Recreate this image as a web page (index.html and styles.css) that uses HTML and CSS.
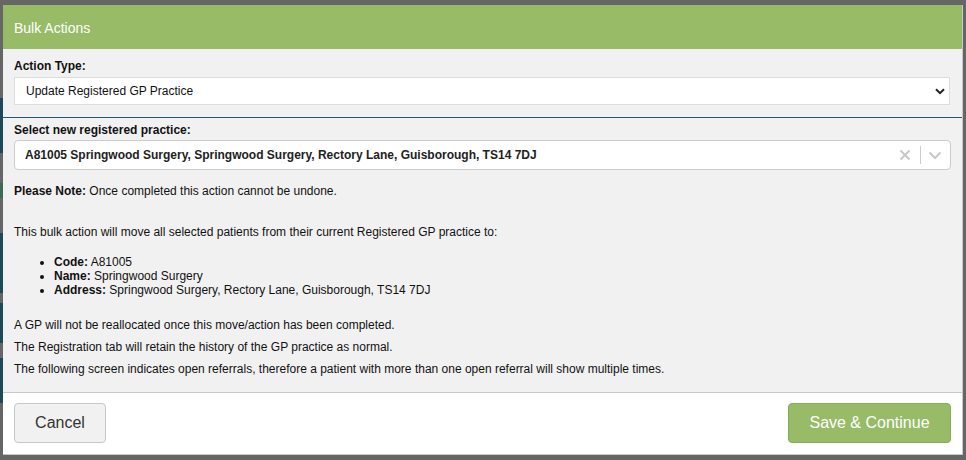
FILE: index.html
```html
<!DOCTYPE html>
<html lang="en">
<head>
<meta charset="utf-8">
<title>Bulk Actions</title>
<link rel="stylesheet" href="styles.css">
</head>
<body>
<div class="backdrop">
  <div class="page-edge">
    <span class="edge-block b1"></span>
    <span class="edge-block b2"></span>
    <span class="edge-block b3"></span>
    <span class="edge-block b4"></span>
    <span class="edge-block b5"></span>
  </div>
  <div class="modal">
    <div class="modal-header">Bulk Actions</div>
    <div class="modal-body">
      <label class="field-label">Action Type:</label>
      <div class="native-select">
        <span>Update Registered GP Practice</span>
        <svg class="select-caret" width="10" height="7" viewBox="0 0 10 7"><path d="M1 1.2 L5 5.2 L9 1.2" fill="none" stroke="#222" stroke-width="2"/></svg>
      </div>
      <hr class="divider">
      <label class="field-label">Select new registered practice:</label>
      <div class="react-select">
        <span class="rs-value">A81005 Springwood Surgery, Springwood Surgery, Rectory Lane, Guisborough, TS14 7DJ</span>
        <span class="rs-indicators">
          <svg class="rs-clear" width="12" height="12" viewBox="0 0 12 12"><path d="M1.5 1.5 L10.5 10.5 M10.5 1.5 L1.5 10.5" stroke="#c8c8c8" stroke-width="2"/></svg>
          <span class="rs-sep"></span>
          <svg class="rs-drop" width="14" height="9" viewBox="0 0 14 9"><path d="M1.5 1.5 L7 7 L12.5 1.5" fill="none" stroke="#c8c8c8" stroke-width="2"/></svg>
        </span>
      </div>
      <p class="note"><strong>Please Note:</strong> Once completed this action cannot be undone.</p>
      <p class="intro">This bulk action will move all selected patients from their current Registered GP practice to:</p>
      <ul class="details">
        <li><strong>Code:</strong> A81005</li>
        <li><strong>Name:</strong> Springwood Surgery</li>
        <li><strong>Address:</strong> Springwood Surgery, Rectory Lane, Guisborough, TS14 7DJ</li>
      </ul>
      <p class="info">A GP will not be reallocated once this move/action has been completed.</p>
      <p class="info">The Registration tab will retain the history of the GP practice as normal.</p>
      <p class="info">The following screen indicates open referrals, therefore a patient with more than one open referral will show multiple times.</p>
    </div>
    <div class="modal-footer">
      <button class="btn btn-cancel">Cancel</button>
      <button class="btn btn-save">Save &amp; Continue</button>
    </div>
  </div>
</div>
</body>
</html>
```
FILE: styles.css
```css
* { box-sizing: border-box; }
html, body { margin: 0; padding: 0; }
body {
  background: #666666;
  font-family: "Liberation Sans", Arial, sans-serif;
  width: 966px;
  height: 460px;
  overflow: hidden;
}
.backdrop {
  display: flex;
  padding: 5px 3px 5px 0;
  height: 460px;
}
.page-edge {
  width: 3px;
  display: flex;
  flex-direction: column;
  padding-top: 93px;
}
.edge-block { display: block; width: 3px; background: #1d4a5a; }
.edge-block.b1 { height: 55px; }
.edge-block.b2 { height: 15px; margin-top: 30px; background: #3d6a55; }
.edge-block.b3 { height: 60px; margin-top: 35px; }
.edge-block.b4 { height: 40px; margin-top: 10px; }
.edge-block.b5 { height: 45px; margin-top: 15px; }
.modal {
  width: 960px;
  height: 450px;
  display: flex;
  flex-direction: column;
  background: #f1f1f1;
  border-bottom: 1px solid #c8c8c8;
  border-right: 1px solid #c8c8c8;
}
.modal-header {
  height: 44px;
  background: #97bb67;
  color: #fff;
  font-size: 14px;
  padding: 15px 11px 0;
  line-height: 16px;
}
.modal-body {
  flex: 1;
  padding: 10px 12px 0 11px;
  font-size: 12px;
  color: #111;
  line-height: 14px;
}
.field-label {
  display: block;
  font-weight: bold;
  color: #111;
}
.native-select {
  margin-top: 4px;
  height: 28px;
  background: #fff;
  border: 1px solid #dcdcdc;
  display: flex;
  align-items: center;
  justify-content: space-between;
  padding: 0 4px 0 11px;
  color: #111;
}
.select-caret { margin-top: 1px; }
.divider {
  border: 0;
  border-top: 1px solid #1f5a78;
  margin: 12px -12px 5px -11px;
  height: 0;
}
.react-select {
  margin-top: 3px;
  margin-right: -1px;
  height: 30px;
  background: #fff;
  border: 1px solid #cccccc;
  border-radius: 4px;
  display: flex;
  align-items: center;
  justify-content: space-between;
  padding: 0 8px 0 10px;
}
.rs-value { font-weight: bold; color: #222; }
.rs-indicators { display: flex; align-items: center; }
.rs-clear { margin-right: 9px; }
.rs-sep { width: 1px; height: 18px; background: #cccccc; margin-right: 7px; }
.rs-drop { margin-top: 1px; }
.note { margin: 14px 0 0; }
.intro { margin: 27px 0 0; }
.details {
  margin: 16px 0 0;
  padding-left: 40px;
}
.details li { line-height: 14px; }
.info { margin: 21px 0 0; line-height: 14px; }
.info + .info { margin-top: 8px; }
.modal-footer {
  height: 62px;
  flex: 0 0 62px;
  background: #fff;
  border-top: 1px solid #c8c8c8;
  display: flex;
  justify-content: space-between;
  align-items: flex-start;
  padding: 10px 11px 0 11px;
}
.btn {
  height: 40px;
  font-family: "Liberation Sans", Arial, sans-serif;
  font-size: 16px;
  border-radius: 4px;
  cursor: pointer;
}
.btn-cancel {
  width: 92px;
  background: #f1f1f1;
  border: 1px solid #c8c8c8;
  color: #333;
}
.btn-save {
  width: 163px;
  background: #97bb67;
  border: 1px solid #88ad59;
  color: #fff;
}
```
